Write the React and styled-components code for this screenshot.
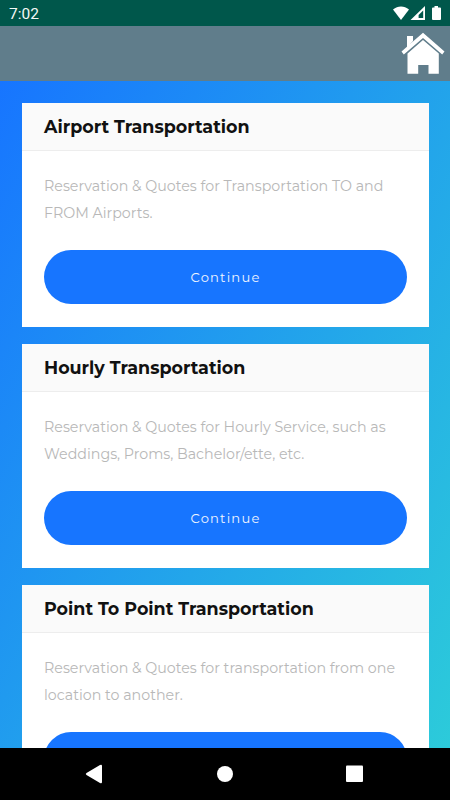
import React from 'react';
import styled, { createGlobalStyle } from 'styled-components';

const GlobalStyle = createGlobalStyle`
	* {
		box-sizing: border-box;
	}

	body {
		margin: 0;
		overflow: hidden;
		font-family: Montserrat, Inter, "Liberation Sans", sans-serif;
	}
`

const Screen = styled.div`
	display: flex;
	flex-direction: column;
	width: 450px;
	height: 800px;
	overflow: hidden;
`

const StatusBar = styled.div`
	display: flex;
	flex: 0 0 26px;
	align-items: center;
	justify-content: space-between;
	padding: 2px 8px 0 9px;
	background-color: #00574b;
	color: #f4f8f6;
	font-family: Roboto, sans-serif;
	font-size: 15.5px;
	line-height: 24px;
`

const StatusIcons = styled.svg`
	display: block;
	width: 50px;
	height: 16px;
	fill: white;
`

const Toolbar = styled.header`
	display: flex;
	flex: 0 0 55px;
	justify-content: flex-end;
	padding: 6px 5px 0 0;
	background-color: #607d8b;
`

const HomeButton = styled.button`
	width: 44px;
	height: 44px;
	padding: 0;
	border: 0;
	background: none;

	& > svg {
		display: block;
		fill: white;
	}
`

const Content = styled.main`
	display: flex;
	flex: 1;
	flex-direction: column;
	gap: 17px;
	min-height: 0;
	padding: 21.6px 21px 0 22px;
	overflow: hidden;
	background: linear-gradient(120deg, #1775ff 0%, #2ccbda 100%);
`

const Card = styled.section`
	flex: 0 0 224px;
	background-color: white;
`

const CardHeading = styled.h2`
	height: 48.4px;
	margin: 0;
	padding: 0 22px;
	border-bottom: 1px solid #ededed;
	background-color: #fafafa;
	color: #111;
	font-size: 17.5px;
	font-weight: 700;
	line-height: 48px;
	white-space: nowrap;
`

const CardBody = styled.div`
	padding: 22.4px 22px 0;
`

const Description = styled.p`
	margin: 0 0 22.6px;
	color: #b8b8b8;
	font-size: 14.24px;
	font-weight: 400;
	line-height: 27px;
`

const Line = styled.span`
	display: block;
	white-space: nowrap;
`

const ContinueButton = styled.button`
	display: block;
	width: 363px;
	height: 54.4px;
	padding: 0;
	border: 0;
	border-radius: 28px;
	background-color: #1775ff;
	color: #f0f5ff;
	font-family: inherit;
	font-size: 13.1px;
	letter-spacing: 1.2px;
	line-height: 54px;
`

const NavigationBar = styled.nav`
	flex: 0 0 52.5px;
	background-color: black;

	& > svg {
		display: block;
		fill: white;
	}
`

const services = [
	{
		title: 'Airport Transportation',
		lines: [
			'Reservation & Quotes for Transportation TO and',
			'FROM Airports.',
		],
	},
	{
		title: 'Hourly Transportation',
		lines: [
			'Reservation & Quotes for Hourly Service, such as',
			'Weddings, Proms, Bachelor/ette, etc.',
		],
	},
	{
		title: 'Point To Point Transportation',
		lines: [
			'Reservation & Quotes for transportation from one',
			'location to another.',
		],
	},
];

export default function App() {
	return (
		<Screen>
			<GlobalStyle />
			<StatusBar>
				<span>7:02</span>
				<StatusIcons viewBox="0 0 50 16">
					<path d="M1 3.4C5.8 -.6 12.2 -.6 17 3.4L9 14Z" />
					<path fillRule="evenodd" d="M18.5 14L33 0V14ZM26.6 12H31.2V4.4L26.6 9Z" />
					<path d="M41.5 1.5H42.5V0H46V1.5H48Q49 1.5 49 2.5V13Q49 14 48 14H41Q40 14 40 13V2.5Q40 1.5 41 1.5Z" />
				</StatusIcons>
			</StatusBar>
			<Toolbar>
				<HomeButton aria-label="Home">
					<svg width="44" height="44" viewBox="0 0 44 44">
						<path d="M6 4H12V9L6 15ZM22 .8L43.5 19.5L41.2 22.5L22 6L2.8 22.5L.5 19.5Z" />
						<path d="M22 8L37.8 21.5V41.8H27.5V33H17.2V41.8H6.5V21.5Z" />
					</svg>
				</HomeButton>
			</Toolbar>
			<Content>
				{services.map((service) => (
					<Card key={service.title}>
						<CardHeading>{service.title}</CardHeading>
						<CardBody>
							<Description>
								{service.lines.map((line) => (
									<Line key={line}>{line}</Line>
								))}
							</Description>
							<ContinueButton>Continue</ContinueButton>
						</CardBody>
					</Card>
				))}
			</Content>
			<NavigationBar>
				<svg width="450" height="52" viewBox="0 0 450 52">
					<path d="M86.5 25L100 17Q102 16 102 18V34Q102 36 100 35L86.5 27Q85 26 86.5 25Z" />
					<circle cx="225" cy="26" r="8" />
					<rect x="346" y="17.5" width="17" height="16.5" rx="1" />
				</svg>
			</NavigationBar>
		</Screen>
	);
}
